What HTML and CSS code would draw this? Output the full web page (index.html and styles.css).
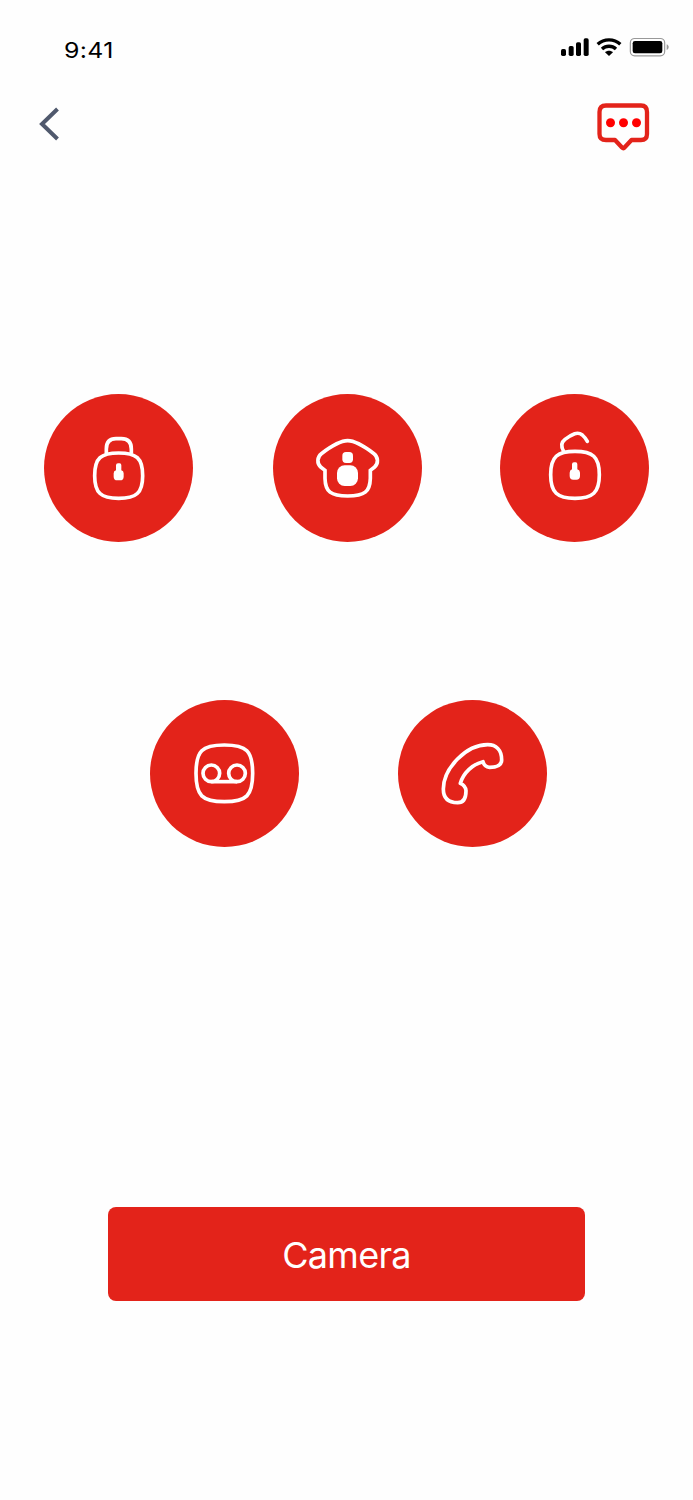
FILE: index.html
```html
<!DOCTYPE html>
<html lang="en">
<head>
    <meta charset="UTF-8">
    <meta name="viewport" content="width=device-width, initial-scale=1.0">
    <title>Intercom</title>
    <link rel="stylesheet" href="styles.css">
</head>
<body>
    <div class="status-bar">
        <span class="time">9:41</span>
        <!-- signal, wifi, battery -->
        <svg class="status-icons" viewBox="0 0 330 60">
            <g fill="#000">
                <rect x="3" y="36" width="15" height="21" rx="5"/>
                <rect x="26" y="27" width="15" height="30" rx="5"/>
                <rect x="48" y="16" width="15" height="41" rx="5"/>
                <rect x="71" y="4" width="15" height="53" rx="5"/>
            </g>
            <g fill="none" stroke="#000" stroke-width="10">
                <path d="M113 22C132 4 162 4 181 22"/>
                <path d="M126 36C138 25 156 25 168 36"/>
            </g>
            <path d="M135 46C142 40 152 40 159 46L147 57Z"/>
            <rect x="211" y="4.500" width="103" height="52" rx="13" fill="none" stroke="#999" stroke-width="3.500"/>
            <rect x="218" y="12" width="89" height="37" rx="7"/>
            <path d="M320 22C328 25 328 36 320 39Z" fill="#999"/>
        </svg>
    </div>

    <div class="header">
        <button class="icon-button back" aria-label="Back">
            <svg width="24" height="36" viewBox="0 0 24 36">
                <path d="M20.500 3L5 18L20.500 33" fill="none" stroke="#50596d" stroke-width="4"/>
            </svg>
        </button>
        <button class="icon-button" aria-label="Messages">
            <svg width="54" height="50" viewBox="0 0 54 50">
                <path d="M10 3.500H45Q51 3.500 51 10V32Q51 38 45 38H35.500L28.500 45.500Q27.500 47 26 45.500L19 38H10Q3.500 38 3.500 32V10Q3.500 3.500 10 3.500Z" fill="none" stroke="#e3231a" stroke-width="4.300" stroke-linejoin="round"/>
                <g fill="#f00">
                    <circle cx="14.500" cy="20.800" r="4.500"/>
                    <circle cx="27.500" cy="20.800" r="4.500"/>
                    <circle cx="40.500" cy="20.800" r="4.500"/>
                </g>
            </svg>
        </button>
    </div>

    <div class="actions">
        <button class="action" aria-label="Lock">
            <svg viewBox="12 12 447 444">
                <path d="M236 189C289 189 308 204 308 257C308 309 289 325 236 325C183 325 164 309 164 257C164 204 183 189 236 189Z"/>
                <path d="M199 191V177Q199 146 228 146H244Q274 146 274 177V191"/>
                <path class="solid" d="M228 226Q228 220 234 220H239Q244 220 244 226V241Q251 243 251 250V260Q251 271 240 271H232Q221 271 221 260V250Q221 243 228 241Z"/>
            </svg>
        </button>
        <button class="action" aria-label="Home">
            <svg viewBox="9 12 447 444">
                <path d="M233 152C250 152 279 166 312 191C324 200 327 220 313 232L301 241V265C300 305 284 318 233 318C182 318 166 305 165 265V241L153 232C139 220 142 200 154 191C187 166 216 152 233 152Z"/>
                <rect class="solid" x="217" y="186" width="32" height="33" rx="11"/>
                <rect class="solid" x="201" y="226" width="63" height="62" rx="23"/>
            </svg>
        </button>
        <button class="action" aria-label="Unlock">
            <svg viewBox="15 12 447 444">
                <path d="M240 184C293 184 313 200 313 254C313 308 293 325 240 325C187 325 167 308 167 254C167 200 187 184 240 184Z"/>
                <path d="M206 184Q193 161 209 149Q225 136 239 131Q252 127 262 135Q271 143 277 154" stroke-linecap="round"/>
                <path class="solid" d="M231 223Q231 217 237 217H242Q247 217 247 223V238Q255 240 255 248V258Q255 269 244 269H235Q224 269 224 258V248Q224 240 231 238Z"/>
            </svg>
        </button>
    </div>

    <div class="actions actions-bottom">
        <button class="action" aria-label="Voicemail">
            <svg viewBox="15 15 447 441">
                <path d="M238 150C305 150 323 168 323 235C323 302 305 320 238 320C171 320 153 302 153 235C153 168 171 150 238 150Z"/>
                <circle cx="199" cy="235" r="25"/>
                <circle cx="276" cy="235" r="25"/>
                <path d="M199 260H276"/>
            </svg>
        </button>
        <button class="action" aria-label="Call">
            <svg viewBox="15 15 447 441">
                <path d="M151 282C151 222 218 149 284 149C309 149 326 165 326 195C326 210 311 217 290 217Q274 216 270 200C238 208 211 234 202 265Q218 272 219 287C219 309 211 323 194 323C165 323 151 308 151 282Z" stroke-linejoin="round"/>
            </svg>
        </button>
    </div>

    <button class="camera">Camera</button>
</body>
</html>
```
FILE: styles.css
```css
body {
    font-family: Inter, Arial, sans-serif;
    margin: 0;
    height: 1500px;
    background-color: #fefefe;
    overflow: hidden;
}
button {
    border: none;
    padding: 0;
    cursor: pointer;
}
svg {
    display: block;
}
.status-bar {
    display: flex;
    justify-content: space-between;
    align-items: flex-start;
    height: 62px;
    padding: 37px 23px 0 64px;
}
.time {
    font-size: 22px;
    line-height: 27px;
    letter-spacing: 0.3px;
    color: #000;
    transform: scaleX(1.13);
    transform-origin: left;
}
.status-icons {
    width: 110px;
    height: 20px;
}
.header {
    display: flex;
    justify-content: space-between;
    align-items: center;
    height: 50px;
    padding: 3px 43px 0 37px;
}
.icon-button {
    background: none;
}
.back {
    margin-bottom: 6px;
}
.actions {
    display: flex;
    gap: 80px;
    margin-top: 242px;
    padding-left: 44px;
}
.actions .action:last-child {
    margin-left: -2px;
}
.actions-bottom {
    gap: 101.4px;
    margin-top: 158px;
    padding-left: 150px;
}
.action {
    width: 149px;
    height: 148px;
    border-radius: 50%;
    background-color: #e3231a;
}
.action svg {
    width: 100%;
    height: 100%;
    fill: none;
    stroke: white;
    stroke-width: 11;
}
.actions-bottom .action {
    height: 147px;
}
.action .solid {
    fill: white;
    stroke: none;
}
.camera {
    display: block;
    width: 477px;
    height: 94px;
    margin: 360px 0 0 108px;
    padding-top: 1px;
    border-radius: 8px;
    background-color: #e3231a;
    color: white;
    font-family: inherit;
    font-size: 36px;
    letter-spacing: -0.7px;
}
```
